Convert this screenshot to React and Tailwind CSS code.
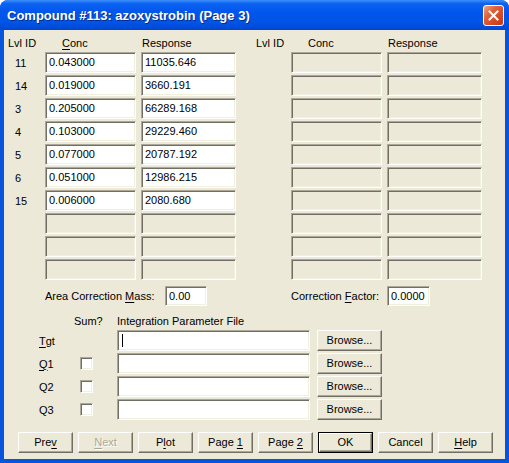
import React from "react";

// Bordes 3D estilo Windows clásico
const sunken =
  "border border-t-[#aca899] border-l-[#aca899] border-r-white border-b-white shadow-[inset_1px_1px_0_#716f64,inset_-1px_-1px_0_#f1efe2]";
const raised =
  "border border-t-white border-l-white border-r-[#716f64] border-b-[#716f64] shadow-[inset_-1px_-1px_0_#aca899] bg-[#ece9d8]";

function U({ children }) {
  return <span className="underline decoration-1 underline-offset-[2px]">{children}</span>;
}

function Edit({ value, disabled, className = "", caret }) {
  return (
    <div
      className={`${sunken} ${disabled ? "bg-[#ece9d8]" : "bg-white"} h-[21px] flex items-center pl-[3px] text-black ${className}`}
    >
      {caret && <span className="w-px h-[13px] bg-black ml-[1px]" />}
      {value}
    </div>
  );
}

function Btn({ children, disabled, def, className = "" }) {
  const inner = (
    <div
      className={`${raised} h-full w-full flex items-center justify-center ${
        disabled ? "text-[#aca899] [text-shadow:1px_1px_0_#fff]" : "text-black"
      }`}
    >
      <span>{children}</span>
    </div>
  );
  if (def) {
    return <div className={`border border-black h-[21px] ${className}`}>{inner}</div>;
  }
  return <div className={`h-[21px] ${className}`}>{inner}</div>;
}

function Check() {
  return <div className={`${sunken} bg-white w-[13px] h-[13px]`} />;
}

const rows = [
  ["11", "0.043000", "11035.646"],
  ["14", "0.019000", "3660.191"],
  ["3", "0.205000", "66289.168"],
  ["4", "0.103000", "29229.460"],
  ["5", "0.077000", "20787.192"],
  ["6", "0.051000", "12986.215"],
  ["15", "0.006000", "2080.680"],
  ["", null, null],
  ["", null, null],
  ["", null, null],
];

const files = [
  { label: <><U>T</U>gt</>, check: false, caret: true },
  { label: <><U>Q</U>1</>, check: true },
  { label: <>Q2</>, check: true },
  { label: <>Q3</>, check: true },
];

export default function App() {
  return (
    <div className="w-[509px] h-[463px] flex flex-col rounded-t-[8px] overflow-hidden bg-[#0855dd] font-['Liberation_Sans',Arial,sans-serif] text-[11px] leading-[13px]">
      {/* Barra de título */}
      <div className="h-[30px] shrink-0 flex items-center pl-[7px] pr-[5px] bg-[linear-gradient(to_bottom,#3d8ff8_0%,#0c63f2_12%,#0056eb_40%,#0054e6_75%,#0047d2_100%)]">
        <div className="flex-1 text-white font-bold text-[13px] leading-[16px] [text-shadow:1px_1px_0_#0a2a8a] pt-[1px]">
          Compound #113: azoxystrobin (Page 3)
        </div>
        <div className="w-[21px] h-[21px] rounded-[3px] border border-white bg-[linear-gradient(135deg,#f2a285_0%,#e2603a_35%,#d2451f_75%,#c23a18_100%)] flex items-center justify-center">
          <svg width="11" height="11" viewBox="0 0 11 11">
            <path d="M1.5 1.5 L9.5 9.5 M9.5 1.5 L1.5 9.5" stroke="white" strokeWidth="2" strokeLinecap="square" />
          </svg>
        </div>
      </div>

      {/* Área cliente */}
      <div className="flex-1 mx-[4px] mb-[4px] bg-[#ece9d8] flex flex-col text-black">
        {/* Tablas de niveles */}
        <div className="flex pt-[7px]">
          {/* Lado izquierdo */}
          <div className="ml-[4px] flex flex-col gap-[2px]">
            <div className="flex h-[13px]">
              <div className="w-[37px]">Lvl ID</div>
              <div className="w-[96px] pl-[17px]"><U>C</U>onc</div>
              <div className="w-[95px] pl-[1px]">Response</div>
            </div>
            {rows.map(([id, conc, resp], i) => (
              <div key={i} className="flex items-center">
                <div className="w-[37px] pl-[7px] pt-[2px]">{id}</div>
                <Edit value={conc} disabled={conc === null} className="w-[91px] mr-[5px]" />
                <Edit value={resp} disabled={resp === null} className="w-[95px]" />
              </div>
            ))}
          </div>
          {/* Lado derecho */}
          <div className="ml-[20px] flex flex-col gap-[2px]">
            <div className="flex h-[13px]">
              <div className="w-[35px]">Lvl ID</div>
              <div className="w-[96px] pl-[17px]">Conc</div>
              <div className="w-[95px] pl-[1px]">Response</div>
            </div>
            {rows.map((_, i) => (
              <div key={i} className="flex items-center">
                <div className="w-[35px]" />
                <Edit disabled className="w-[91px] mr-[5px]" />
                <Edit disabled className="w-[95px]" />
              </div>
            ))}
          </div>
        </div>

        {/* Factores de corrección */}
        <div className="flex items-center mt-[6px] pl-[41px]">
          <div className="w-[120px]">Area Correction <U>M</U>ass:</div>
          <Edit value="0.00" className="w-[42px] h-[20px]!" />
          <div className="w-[96px] ml-[84px]">Correction <U>F</U>actor:</div>
          <Edit value="0.0000" className="w-[43px] h-[20px]!" />
        </div>

        {/* Archivos de integración */}
        <div className="flex h-[13px] mt-[9px]">
          <div className="w-[70px]" />
          <div className="w-[43px]">Sum?</div>
          <div>Integration Parameter File</div>
        </div>
        <div className="flex flex-col gap-[2px] mt-[2px]">
          {files.map((f, i) => (
            <div key={i} className="flex items-center">
              <div className="w-[41px] ml-[35px] pt-[1px]">{f.label}</div>
              <div className="w-[37px]">{f.check && <Check />}</div>
              <Edit className="w-[193px]" caret={f.caret} />
              <Btn className="w-[65px] ml-[7px]">Browse...</Btn>
            </div>
          ))}
        </div>

        {/* Botones inferiores */}
        <div className="flex gap-[5px] pl-[14px] mt-[12px]">
          <Btn className="w-[55px]">Pre<U>v</U></Btn>
          <Btn className="w-[55px]" disabled><U>N</U>ext</Btn>
          <Btn className="w-[55px]">P<U>l</U>ot</Btn>
          <Btn className="w-[55px]">Page <U>1</U></Btn>
          <Btn className="w-[55px]">Page <U>2</U></Btn>
          <Btn className="w-[55px]" def>OK</Btn>
          <Btn className="w-[55px]">Cancel</Btn>
          <Btn className="w-[55px]"><U>H</U>elp</Btn>
        </div>
      </div>
    </div>
  );
}
